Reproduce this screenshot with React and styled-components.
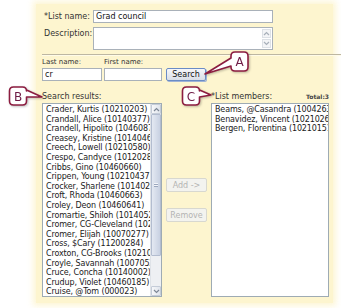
import React from 'react';
import styled, { createGlobalStyle } from 'styled-components';

const searchResults = [
  'Crader, Kurtis (10210203)',
  'Crandall, Alice (10140377)',
  'Crandell, Hipolito (10460871)',
  'Creasey, Kristine (10140466)',
  'Creech, Lowell (10210580)',
  'Crespo, Candyce (10120286)',
  'Cribbs, Gino (10460660)',
  'Crippen, Young (10210437)',
  'Crocker, Sharlene (10140255)',
  'Croft, Rhoda (10460663)',
  'Croley, Deon (10460641)',
  'Cromartie, Shiloh (10140525)',
  'Cromer, CG-Cleveland (10210345)',
  'Cromer, Elijah (10070277)',
  'Cross, $Cary (11200284)',
  'Croxton, CG-Brooks (10210187)',
  'Croyle, Savannah (10070526)',
  'Cruce, Concha (10140002)',
  'Crudup, Violet (10460185)',
  'Cruise, @Tom (000023)',
];

const members = [
  'Beams, @Casandra (10042631)',
  'Benavidez, Vincent (10210266)',
  'Bergen, Florentina (10210151)',
];

// callout box with a wedge pointing at its target
const calloutPath = ({ x, y, w, h, r, side, y1, y2, tx, ty }) => {
  if (side === 'left') {
    return `M${x + r},${y} H${x + w - r} Q${x + w},${y} ${x + w},${y + r} V${y + h - r} Q${x + w},${y + h} ${x + w - r},${y + h} H${x + r} Q${x},${y + h} ${x},${y + h - r} V${y2} L${tx},${ty} L${x},${y1} V${y + r} Q${x},${y} ${x + r},${y} Z`;
  }
  return `M${x + r},${y} H${x + w - r} Q${x + w},${y} ${x + w},${y + r} V${y1} L${tx},${ty} L${x + w},${y2} V${y + h - r} Q${x + w},${y + h} ${x + w - r},${y + h} H${x + r} Q${x},${y + h} ${x},${y + h - r} V${y + r} Q${x},${y} ${x + r},${y} Z`;
};

const callouts = [
  { letter: 'A', x: 231, y: 52, w: 17, h: 19, r: 4, side: 'left', y1: 58, y2: 66, tx: 205, ty: 74 },
  { letter: 'B', x: 9.5, y: 87, w: 17, h: 18, r: 4, side: 'right', y1: 90, y2: 97, tx: 42, ty: 97 },
  { letter: 'C', x: 182.5, y: 87, w: 17, h: 18, r: 4, side: 'right', y1: 90, y2: 97, tx: 211, ty: 95 },
];

const Chevron = ({ up, color = '#7d8796' }) => (
  <svg width="7" height="5" viewBox="0 0 7 5">
    <polyline
      points={up ? '1,4 3.5,1.5 6,4' : '1,1 3.5,3.5 6,1'}
      fill="none"
      stroke={color}
      strokeWidth="1.2"
    />
  </svg>
);

const App = () => {
  return (
    <>
      <GlobalStyle />
      <Page>
        <Panel>
          <TopForm>
            <Label>*List name:</Label>
            <TextInput readOnly value="Grad council" />
            <Label>Description:</Label>
            <TextArea>
              <TextAreaBody />
              <MiniScroll>
                <MiniArrow><Chevron up color="#a8b0ba" /></MiniArrow>
                <MiniArrow><Chevron color="#a8b0ba" /></MiniArrow>
              </MiniScroll>
            </TextArea>
          </TopForm>
          <Rule />
          <SearchRow>
            <Field>
              <SmallLabel>Last name:</SmallLabel>
              <TextInput readOnly value="cr" $width={60} />
            </Field>
            <Field>
              <SmallLabel>First name:</SmallLabel>
              <TextInput readOnly value="" $width={58} />
            </Field>
            <SearchButton>Search</SearchButton>
          </SearchRow>
          <Lists>
            <Column $width={120}>
              <ColumnHead>Search results:</ColumnHead>
              <ListBox>
                <Items>
                  {searchResults.map((name) => (
                    <Item key={name}>{name}</Item>
                  ))}
                </Items>
                <Scrollbar>
                  <ScrollArrow><Chevron up /></ScrollArrow>
                  <Thumb>
                    <Grip />
                  </Thumb>
                  <Track />
                  <ScrollArrow><Chevron /></ScrollArrow>
                </Scrollbar>
              </ListBox>
            </Column>
            <Middle>
              <MoveButton disabled>Add -&gt;</MoveButton>
              <MoveButton disabled>Remove</MoveButton>
            </Middle>
            <Column $width={118}>
              <ColumnHead>
                <span>*List members:</span>
                <Total>Total:3</Total>
              </ColumnHead>
              <ListBox>
                <Items>
                  {members.map((name) => (
                    <Item key={name}>{name}</Item>
                  ))}
                </Items>
              </ListBox>
            </Column>
          </Lists>
        </Panel>
        <Overlay width="341" height="308" viewBox="0 0 341 308">
          {callouts.map((c) => (
            <g key={c.letter}>
              <path d={calloutPath(c)} fill="#fff" stroke="#8c1d40" strokeWidth="1.6" strokeLinejoin="round" />
              <CalloutText x={c.x + c.w / 2} y={c.y + c.h / 2 + 4.5} textAnchor="middle">
                {c.letter}
              </CalloutText>
            </g>
          ))}
        </Overlay>
      </Page>
    </>
  );
};

export default App;

const GlobalStyle = createGlobalStyle`
  body {
    margin: 0;
    background: #fff;
  }
`;

const Page = styled.div`
  position: relative;
  width: 341px;
  height: 308px;
  overflow: hidden;
  box-sizing: border-box;
  padding: 4px 0 0 36px;
  font-family: "DejaVu Sans", Verdana, sans-serif;
  font-size: 8px;
  color: #222;
`;

const Panel = styled.div`
  width: 297px;
  height: 299px;
  box-sizing: border-box;
  padding-top: 6px;
  background: #fdf5cf;
  box-shadow: 0 0 6px 3px rgba(253, 245, 207, 0.85);
`;

const TopForm = styled.div`
  display: grid;
  grid-template-columns: 49px 180px;
  row-gap: 4px;
  padding-left: 8px;
`;

const Label = styled.div`
  line-height: 13px;
  color: #333;
  white-space: nowrap;
`;

const TextInput = styled.input`
  box-sizing: border-box;
  width: ${(p) => (p.$width ? `${p.$width}px` : '100%')};
  height: 13px;
  margin: 0;
  padding: 0 2px;
  border: 1px solid #a9b1b9;
  background: #fff;
  font-family: "DejaVu Sans", Verdana, sans-serif;
  font-size: 8px;
  color: #111;
  outline: none;
`;

const TextArea = styled.div`
  display: flex;
  height: 23px;
  box-sizing: border-box;
  border: 1px solid #a9b1b9;
  background: #fff;
`;

const TextAreaBody = styled.div`
  flex: 1;
`;

const MiniScroll = styled.div`
  display: flex;
  flex-direction: column;
  gap: 1px;
  width: 9px;
  padding: 1px 1px 1px 0;
`;

const MiniArrow = styled.div`
  flex: 1;
  display: flex;
  align-items: center;
  justify-content: center;
  border: 1px solid #dde1e6;
  background: #f4f5f7;
`;

const Rule = styled.div`
  margin: 4px -8px 0 6px;
  border-top: 1px solid #bdb7a2;
  border-bottom: 1px solid #fffbe8;
`;

const SearchRow = styled.div`
  display: flex;
  align-items: flex-end;
  gap: 2px;
  padding: 2px 0 0 6px;
`;

const Field = styled.div`
  display: flex;
  flex-direction: column;
`;

const SmallLabel = styled.div`
  font-size: 7px;
  line-height: 9px;
  margin-bottom: 1px;
  color: #333;
`;

const SearchButton = styled.button`
  box-sizing: border-box;
  width: 40px;
  height: 13px;
  margin: 0 0 0 2px;
  padding: 0;
  border: 1px solid #6a8cc6;
  border-radius: 2px;
  background: linear-gradient(#f6f7fa, #d9dee7);
  box-shadow: 1px 1px 0 #9fb3d6;
  font-family: "DejaVu Sans", Verdana, sans-serif;
  font-size: 8px;
  line-height: 11px;
  color: #111;
`;

const Lists = styled.div`
  display: flex;
  margin-top: 11px;
  padding-left: 6px;
`;

const Column = styled.div`
  display: flex;
  flex-direction: column;
  width: ${(p) => p.$width}px;
`;

const ColumnHead = styled.div`
  display: flex;
  justify-content: space-between;
  align-items: baseline;
  height: 9px;
  line-height: 9px;
  margin-bottom: 2px;
  color: #333;
  white-space: nowrap;
`;

const Total = styled.span`
  font-size: 6px;
  font-weight: bold;
  color: #444;
`;

const ListBox = styled.div`
  display: flex;
  height: 194px;
  box-sizing: border-box;
  border: 1px solid #9eabb4;
  background: #fff;
  overflow: hidden;
`;

const Items = styled.div`
  flex: 1;
  min-width: 0;
  padding: 1px 0 0 3px;
  overflow: hidden;
`;

const Item = styled.div`
  line-height: 9.6px;
  letter-spacing: -0.13px;
  white-space: nowrap;
  color: #1a1a1a;
`;

const Scrollbar = styled.div`
  display: flex;
  flex-direction: column;
  width: 10px;
  flex-shrink: 0;
  background: #eef0f3;
  border-left: 1px solid #dfe3e8;
`;

const ScrollArrow = styled.div`
  height: 10px;
  display: flex;
  align-items: center;
  justify-content: center;
  box-sizing: border-box;
  border: 1px solid #c4ccd8;
  border-radius: 1px;
  background: linear-gradient(90deg, #f7f8fa, #dfe4ec);
`;

const Thumb = styled.div`
  height: 142px;
  display: flex;
  align-items: center;
  justify-content: center;
  box-sizing: border-box;
  border: 1px solid #b3bdd0;
  border-radius: 1px;
  background: linear-gradient(90deg, #e4e9f2, #c8d1e2);
`;

const Grip = styled.div`
  width: 4px;
  height: 4px;
  background: repeating-linear-gradient(#f4f6fa 0 1px, #9aa6bd 1px 2px);
`;

const Track = styled.div`
  flex: 1;
`;

const Middle = styled.div`
  display: flex;
  flex-direction: column;
  align-items: center;
  gap: 16px;
  width: 49px;
  padding-top: 86px;
`;

const MoveButton = styled.button`
  box-sizing: border-box;
  width: 41px;
  height: 14px;
  margin: 0;
  padding: 0;
  border: 1px solid #d8d8d0;
  border-radius: 2px;
  background: #f3f3ef;
  font-family: "DejaVu Sans", Verdana, sans-serif;
  font-size: 8px;
  color: #b3b3b3;
`;

const Overlay = styled.svg`
  position: absolute;
  top: 0;
  left: 0;
  pointer-events: none;
  filter: drop-shadow(1px 1px 0.8px rgba(0, 0, 0, 0.25));
`;

const CalloutText = styled.text`
  font-family: "DejaVu Sans", Verdana, sans-serif;
  font-size: 12px;
  fill: #6e1b45;
`;
